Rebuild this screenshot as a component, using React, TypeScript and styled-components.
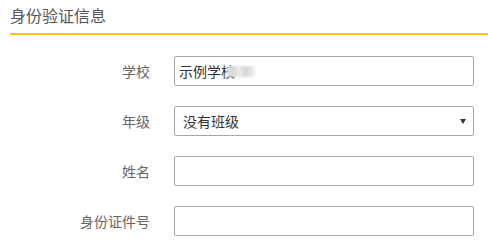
import React from 'react';
import styled, { createGlobalStyle } from 'styled-components';

const GlobalStyle = createGlobalStyle`
  body {
    margin: 0;
    background: #fff;
    font-family: "Microsoft YaHei", "Noto Sans CJK SC", "Noto Sans", sans-serif;
  }
`;

const Page = styled.div`
  width: 488px;
  height: 250px;
  overflow: hidden;
`;

const Header = styled.div`
  margin-left: 10px;
  padding: 3px 0 6px;
  border-bottom: 2px solid #f5c51c;
`;

const Title = styled.h2`
  margin: 0;
  font-size: 16px;
  font-weight: normal;
  line-height: 24px;
  color: #555;
`;

const Form = styled.div`
  display: flex;
  flex-direction: column;
  gap: 20px;
  padding-top: 21px;
`;

const Row = styled.div`
  display: flex;
  align-items: center;
  height: 30px;
`;

const Label = styled.label`
  width: 150px;
  margin-right: 24px;
  text-align: right;
  font-size: 14px;
  color: #666;
`;

const Field = styled.div<{ $pad?: number }>`
  position: relative;
  box-sizing: border-box;
  width: 300px;
  height: 30px;
  display: flex;
  align-items: center;
  padding: 0 ${(p) => p.$pad ?? 4}px;
  border: 1px solid #a6a6a6;
  border-radius: 2px;
  background: #fff;
  font-size: 14px;
  color: #333;
`;

// masked part of the school name
const Blurred = styled.span`
  display: inline-block;
  width: 28px;
  height: 11px;
  margin-left: -8px;
  background: linear-gradient(
    90deg,
    #e4e4e4,
    #d8d8d8 25%,
    #ececec 45%,
    #d4d4d4 65%,
    #e0e0e0 80%,
    #f0f0f0
  );
  filter: blur(1.2px);
`;

const Arrow = styled.span`
  position: absolute;
  right: 7px;
  top: 12px;
  width: 0;
  height: 0;
  border-left: 3px solid transparent;
  border-right: 3px solid transparent;
  border-top: 5px solid #333;
`;

const App: React.FC = () => {
  return (
    <Page>
      <GlobalStyle />
      <Header>
        <Title>身份验证信息</Title>
      </Header>
      <Form>
        <Row>
          <Label>学校</Label>
          <Field>
            示例学校
            <Blurred />
          </Field>
        </Row>
        <Row>
          <Label>年级</Label>
          <Field $pad={8}>
            没有班级
            <Arrow />
          </Field>
        </Row>
        <Row>
          <Label>姓名</Label>
          <Field />
        </Row>
        <Row>
          <Label>身份证件号</Label>
          <Field />
        </Row>
      </Form>
    </Page>
  );
};

export default App;
